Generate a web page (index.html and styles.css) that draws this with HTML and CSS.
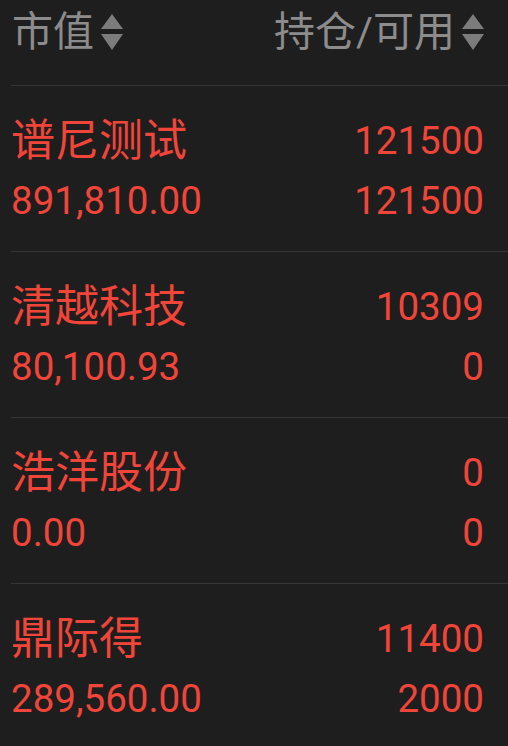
FILE: index.html
```html
<!DOCTYPE html>
<html lang="zh-CN">

<head>
	<meta charset="UTF-8">
	<meta name="viewport" content="width=device-width, initial-scale=1.0">
	<title>持仓</title>
	<link rel="stylesheet" href="styles.css">
</head>

<body>
	<div class="header">
		<div class="sort">
			<span>市值</span>
			<svg class="arrows" width="22" height="36" viewBox="0 0 22 36">
				<polygon points="11,0 22,15 0,15" />
				<polygon points="0,20 22,20 11,36" />
			</svg>
		</div>
		<div class="sort">
			<span>持仓/可用</span>
			<svg class="arrows" width="22" height="36" viewBox="0 0 22 36">
				<polygon points="11,0 22,15 0,15" />
				<polygon points="0,20 22,20 11,36" />
			</svg>
		</div>
	</div>

	<div class="list">
		<div class="item">
			<div class="line">
				<span class="name">谱尼测试</span>
				<span class="num">121500</span>
			</div>
			<div class="line">
				<span class="num">891,810.00</span>
				<span class="num">121500</span>
			</div>
		</div>
		<div class="item">
			<div class="line">
				<span class="name">清越科技</span>
				<span class="num">10309</span>
			</div>
			<div class="line">
				<span class="num">80,100.93</span>
				<span class="num">0</span>
			</div>
		</div>
		<div class="item">
			<div class="line">
				<span class="name">浩洋股份</span>
				<span class="num">0</span>
			</div>
			<div class="line">
				<span class="num">0.00</span>
				<span class="num">0</span>
			</div>
		</div>
		<div class="item">
			<div class="line">
				<span class="name">鼎际得</span>
				<span class="num">11400</span>
			</div>
			<div class="line">
				<span class="num">289,560.00</span>
				<span class="num">2000</span>
			</div>
		</div>
	</div>
</body>

</html>
```

FILE: styles.css
```css
body {
	margin: 0;
	background-color: #1e1e1e;
	font-family: Roboto, "Noto Sans CJK SC", sans-serif;
	overflow: hidden;
}

.header {
	display: flex;
	justify-content: space-between;
	margin-left: 11px;
	padding: 2px 24px 23px 1px;
	border-bottom: 1px solid #353535;
	color: #8c8c8c;
	font-size: 41px;
	line-height: 60px;
}

.sort {
	display: flex;
	align-items: center;
}

.arrows {
	margin-left: 7px;
	fill: #7c7c7c;
}

.item {
	margin-left: 11px;
	padding: 25px 24px 20px 0;
	border-bottom: 1px solid #353535;
	color: #f2453a;
}

.line {
	display: flex;
	justify-content: space-between;
	align-items: center;
	height: 60px;
}

.name {
	font-size: 44px;
	line-height: 60px;
}

.num {
	font-size: 38.5px;
	line-height: 60px;
}
```
